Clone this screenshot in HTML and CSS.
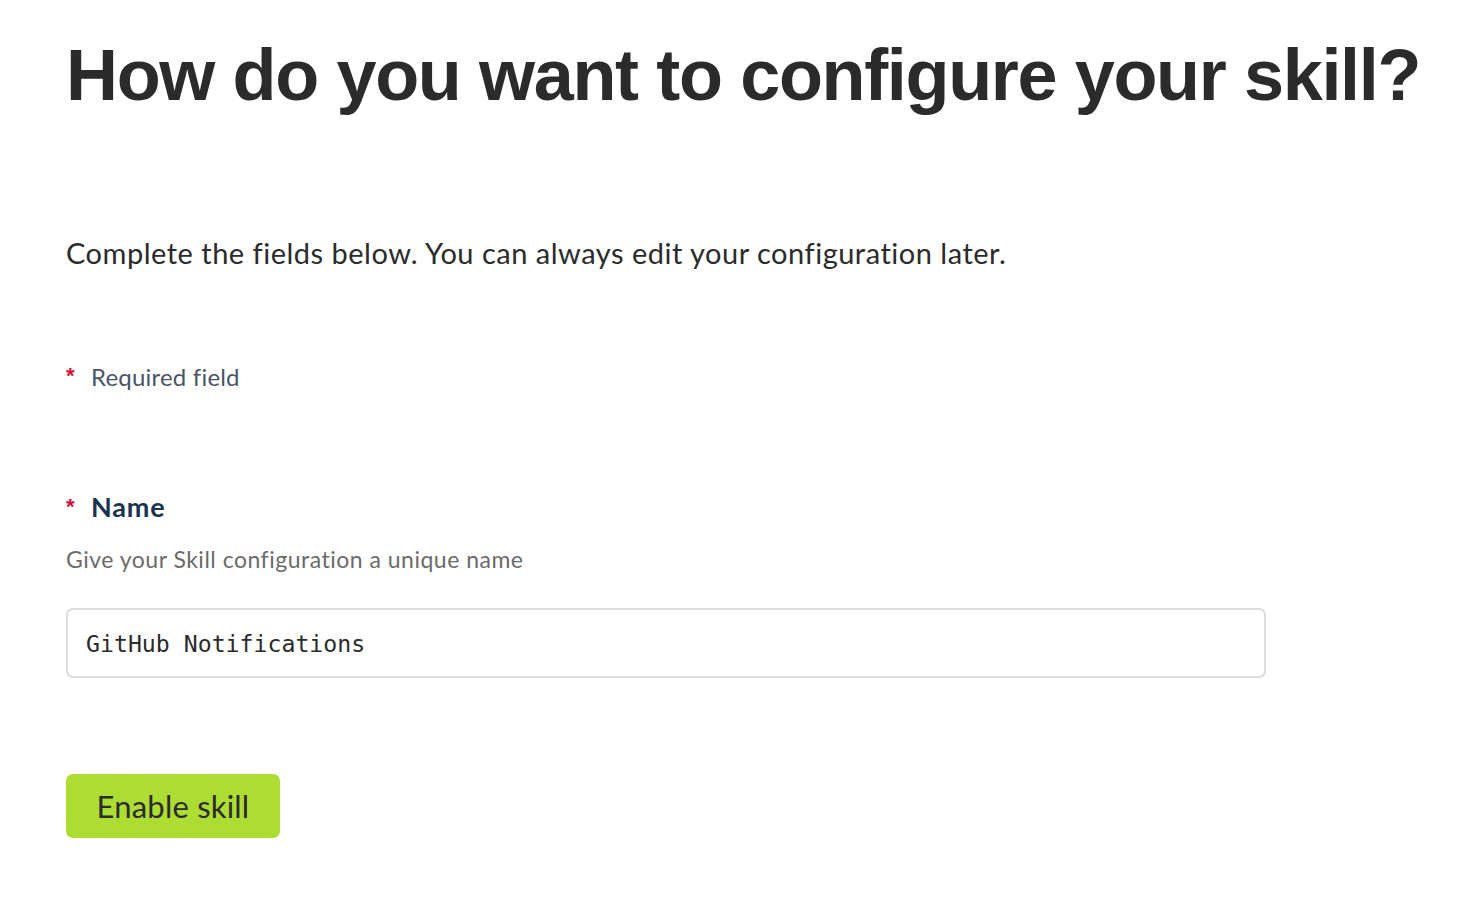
FILE: index.html
```html
<!DOCTYPE html>
<html lang="en">
<head>
<meta charset="utf-8">
<title>Configure skill</title>
<link rel="stylesheet" href="styles.css">
</head>
<body>
<main class="page">
  <h1 class="title">How do you want to configure your skill?</h1>
  <p class="intro">Complete the fields below. You can always edit your configuration later.</p>
  <p class="required-note"><span class="star">*</span><span>Required field</span></p>
  <div class="field">
    <label class="field-label" for="name"><span class="star star-label">*</span><span>Name</span></label>
    <p class="field-help">Give your Skill configuration a unique name</p>
    <input class="field-input" id="name" type="text" value="GitHub Notifications">
  </div>
  <button class="btn-primary" type="button">Enable skill</button>
</main>
</body>
</html>
```
FILE: styles.css
```css
html, body {
  margin: 0;
  padding: 0;
  background: #ffffff;
}
body {
  font-family: "Lato", "Liberation Sans", sans-serif;
  font-variant-ligatures: none;
  color: #2b2b2b;
}
.page {
  padding: 30px 0 0 66px;
}
.title {
  font-family: "Liberation Sans", Arial, sans-serif;
  font-weight: 700;
  font-size: 72px;
  line-height: 90px;
  color: #2b2b2b;
  margin: 0;
  letter-spacing: -1.35px;
}
.intro {
  font-size: 29px;
  line-height: 36px;
  letter-spacing: 0.5px;
  margin: 115px 0 0;
  color: #2b2b2b;
}
.required-note {
  display: flex;
  align-items: flex-start;
  margin: 91px 0 0;
  font-size: 24px;
  line-height: 30px;
  letter-spacing: 0.2px;
  color: #4a5567;
}
.star {
  font-family: "Liberation Sans", Arial, sans-serif;
  font-weight: 700;
  color: #d0103a;
  width: 25px;
  font-size: 22px;
  line-height: 26px;
  padding-top: 1px;
  flex: none;
}
.star-label {
  padding-top: 4px;
}
.field {
  margin-top: 98px;
}
.field-label {
  display: flex;
  align-items: flex-start;
  font-size: 27px;
  line-height: 34px;
  letter-spacing: 0.8px;
  font-weight: 700;
  color: #1a3350;
}
.field-help {
  margin: 20px 0 0;
  font-size: 23px;
  line-height: 30px;
  letter-spacing: 0.5px;
  color: #6b6b6b;
}
.field-input {
  display: block;
  box-sizing: border-box;
  margin-top: 34px;
  width: 1200px;
  height: 70px;
  padding: 0 18px;
  border: 2px solid #dcdcdc;
  border-radius: 7px;
  font-family: "DejaVu Sans Mono", "Liberation Mono", monospace;
  font-size: 23.2px;
  color: #2b2b2b;
  background: #fff;
  outline: none;
}
.btn-primary {
  display: block;
  margin-top: 96px;
  height: 64px;
  width: 214px;
  border: none;
  border-radius: 7px;
  background: #addc33;
  color: #2b2b2b;
  font-family: "Lato", "Liberation Sans", sans-serif;
  font-size: 31px;
  letter-spacing: 0.2px;
  padding: 0;
  cursor: pointer;
}
```
